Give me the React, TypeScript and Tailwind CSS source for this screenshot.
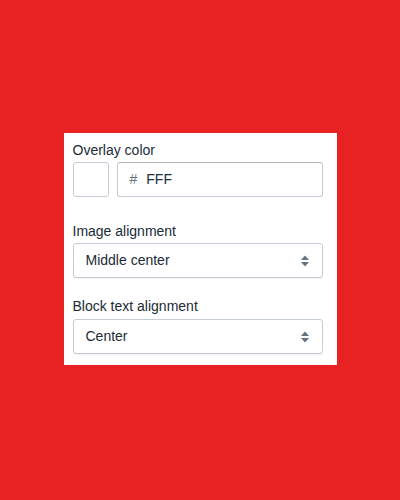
import React from "react";

function Arrows() {
  return (
    <svg width="10" height="14" viewBox="0 0 10 14" className="shrink-0">
      <path d="M5 1.5 L9 6 H1 Z" fill="#637381" />
      <path d="M5 12.5 L9 8 H1 Z" fill="#637381" />
    </svg>
  );
}

function SelectBox({ value }: { value: string }) {
  return (
    <div className="h-[35px] w-full flex items-center justify-between rounded-[3px] border border-[#c4cdd5] bg-white pl-[12px] pr-[12px] shadow-[0_1px_0_0_rgba(22,29,37,0.05)]">
      <span className="text-[14px] text-[#212b36]">{value}</span>
      <Arrows />
    </div>
  );
}

export default function App() {
  return (
    <div
      className="w-[400px] h-[500px] bg-[#e82223] flex items-center justify-center pb-[2px]"
      style={{ fontFamily: '"Liberation Sans", Arial, sans-serif' }}
    >
      <div className="w-[273px] bg-white pt-[7px] pl-[9px] pr-[14px] pb-[11px] flex flex-col">
        <div className="text-[14px] leading-[20px] text-[#212b36]">Overlay color</div>
        <div className="mt-[2px] flex gap-[8px]">
          <div className="w-[36px] h-[35px] rounded-[3px] border border-[#c4cdd5] bg-white" />
          <div className="flex-1 h-[35px] flex items-center rounded-[3px] border border-[#c4cdd5] border-t-[#aeb4b9] bg-white pl-[12px] text-[14px]">
            <span className="text-[#637381]">#</span>
            <span className="ml-[9px] text-[#212b36]">FFF</span>
          </div>
        </div>
        <div className="mt-[24px] text-[14px] leading-[20px] text-[#212b36]">Image alignment</div>
        <div className="mt-[2px]">
          <SelectBox value="Middle center" />
        </div>
        <div className="mt-[18px] text-[14px] leading-[20px] text-[#212b36]">Block text alignment</div>
        <div className="mt-[3px]">
          <SelectBox value="Center" />
        </div>
      </div>
    </div>
  );
}
